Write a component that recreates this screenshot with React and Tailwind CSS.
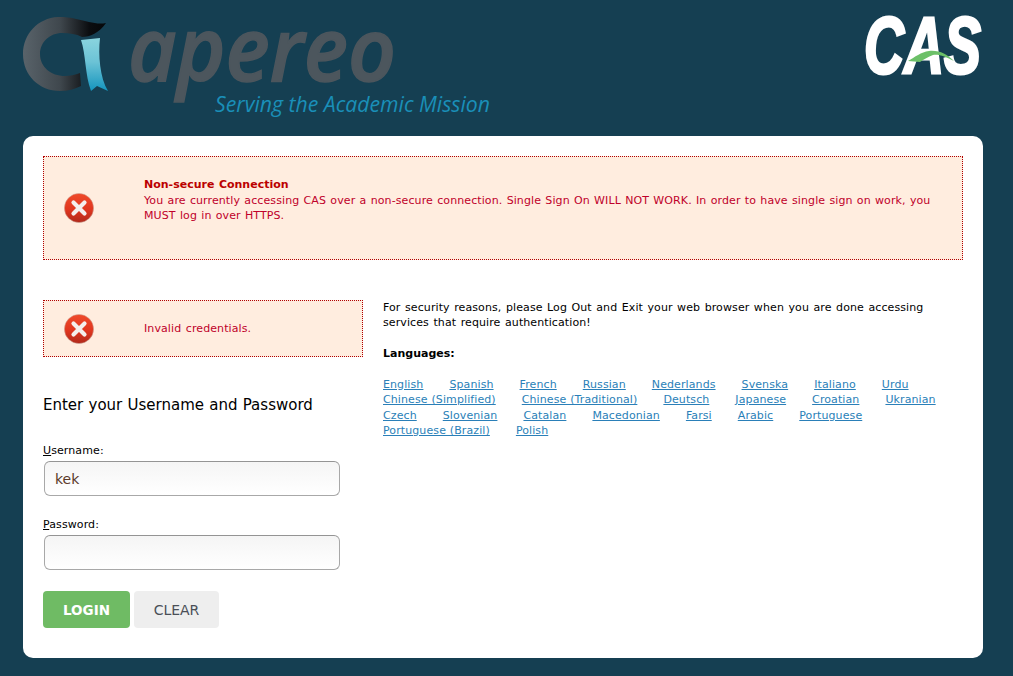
const dv = "font-['DejaVu_Sans',sans-serif]";
const spaced = "tracking-[0.1px] [word-spacing:0.9px]";

function ErrIcon({ id }) {
  return (
    <svg width="30" height="30" viewBox="0 0 30 30" className="shrink-0 block">
      <defs>
        <linearGradient id={id} x1="0" y1="0" x2="0" y2="1">
          <stop offset="0" stopColor="#f04a2a" />
          <stop offset="0.55" stopColor="#e0361f" />
          <stop offset="1" stopColor="#b02a1c" />
        </linearGradient>
      </defs>
      <circle cx="15" cy="15" r="14.6" fill={`url(#${id})`} stroke="#c9a99c" strokeWidth="0.5" />
      <path d="M9.5 9.5 L20.5 20.5 M20.5 9.5 L9.5 20.5" stroke="#f4efed" strokeWidth="4.2" strokeLinecap="round" />
    </svg>
  );
}

function Apereo() {
  return (
    <svg width="490" height="118" viewBox="0 0 490 118" className="block">
      <defs>
        <linearGradient id="ring" x1="0" y1="0" x2="1" y2="0">
          <stop offset="0" stopColor="#59636a" />
          <stop offset="0.45" stopColor="#3f474d" />
          <stop offset="0.8" stopColor="#0b0d10" />
          <stop offset="1" stopColor="#050709" />
        </linearGradient>
        <linearGradient id="rib" x1="0" y1="0" x2="0" y2="1">
          <stop offset="0" stopColor="#8ad4de" />
          <stop offset="0.45" stopColor="#6cc3d6" />
          <stop offset="1" stopColor="#1494bd" />
        </linearGradient>
      </defs>
      <path
        d="M106 23 C96 25 88 21 76 19 C68 17 62 17 58 17 C38 18 23 34 23 54 C23 75 39 91 60 91 C68 91 75 89 81 86 L80 73 C75 75 70 76 65 76 C51 76 40 67 40 54 C40 42 50 33 62 33 C70 33 76 34 82 37 C90 37 99 33 106 23 Z"
        fill="url(#ring)"
      />
      <path d="M81 40 L100 38 C98 55 100 78 108 91 L97 86 L91 91 C85 75 86 55 81 40 Z" fill="url(#rib)" />
      <text x="128" y="81" textLength="268" lengthAdjust="spacingAndGlyphs" fontFamily="'Open Sans',sans-serif" fontStyle="italic" fontWeight="600" fontSize="88" stroke="#4c565d" strokeWidth="1.5" fill="#4c565d">apereo</text>
      <text x="215" y="112" textLength="275" lengthAdjust="spacingAndGlyphs" fontFamily="'Open Sans',sans-serif" fontStyle="italic" fontSize="22" fill="#1a8fb8">Serving the Academic Mission</text>
    </svg>
  );
}

function CasLogo() {
  return (
    <svg width="120" height="62" viewBox="0 0 120 62" className="block">
      <text x="1" y="58" textLength="117" lengthAdjust="spacingAndGlyphs" fontFamily="'Liberation Sans',sans-serif" fontStyle="italic" fontWeight="700" fontSize="80" stroke="#ffffff" strokeWidth="3" fill="#ffffff">CAS</text>
      <path d="M45 46 C52 42 58 37 66 36 C76 35 84 39 91 46 C83 42 76 39 70 40 C65 42 61 44 57 47 Z" fill="#6cc068" />
    </svg>
  );
}

const rows = ["English","Spanish","French","Russian","Nederlands","Svenska","Italiano","Urdu","Chinese (Simplified)","Chinese (Traditional)","Deutsch","Japanese","Croatian","Ukranian","Czech","Slovenian","Catalan","Macedonian","Farsi","Arabic","Portuguese","Portuguese (Brazil)","Polish"];

function Field({ label, rest, value, mb }) {
  return (
    <div className={mb}>
      <label className={`block text-[11px] leading-[15px] text-black mb-[3px] ${spaced}`}><span className="underline">{label}</span>{rest}</label>
      <input
        readOnly
        value={value}
        className={`${dv} ml-px block w-[296px] h-[35px] rounded-[6px] border border-[#a8a8a8] border-t-[#949494] bg-gradient-to-b from-[#f5f5f5] to-white px-[10px] text-[14px] text-[#5b3a2a] outline-none`}
      />
    </div>
  );
}

export default function App() {
  return (
    <div className={`${dv} min-h-[676px] bg-[#153f52] pl-[23px] pr-[30px] pb-[18px]`}>
      <header className="flex h-[136px] items-start justify-between">
        <div className="-ml-[23px]"><Apereo /></div>
        <div className="mt-[15px]"><CasLogo /></div>
      </header>
      <main className="h-[522px] rounded-[10px] bg-white p-5">
        <div className="flex h-[104px] items-start border border-dotted border-[#b00000] bg-[#ffeddf] text-[11px] leading-[15.4px] text-[#c0002a] tracking-[0.1px] [word-spacing:0.68px]">
          <div className="mt-[36px] ml-[20px] w-[80px] shrink-0"><ErrIcon id="e1" /></div>
          <div className="mt-[20.3px] pr-[20px]">
            <div className="font-bold text-[#bb0000] tracking-normal">Non-secure Connection</div>
            <p>You are currently accessing CAS over a non-secure connection. Single Sign On WILL NOT WORK. In order to have single sign on work, you MUST log in over HTTPS.</p>
          </div>
        </div>
        <div className="mt-10 flex gap-5">
          <div className="w-[320px]">
            <div className={`flex h-[57px] items-center border border-dotted border-[#b00000] bg-[#ffeddf] text-[11px] text-[#c0002a] ${spaced}`}>
              <div className="ml-[20px] w-[80px] shrink-0"><ErrIcon id="e2" /></div>
              <span className="pt-px">Invalid credentials.</span>
            </div>
            <h2 className="mt-[38px] text-[15px] leading-[20px] text-black [word-spacing:0.5px]">Enter your Username and Password</h2>
            <div className="mt-[28px]">
              <Field label="U" rest="sername:" value="kek" mb="mb-[21px]" />
              <Field label="P" rest="assword:" value="" mb="mb-[21px]" />
            </div>
            <div className="flex gap-1">
              <button className="h-[37px] w-[87px] rounded-[4px] bg-[#6fbb64] pt-px text-[13.5px] font-bold text-white">LOGIN</button>
              <button className="h-[37px] w-[85px] rounded-[4px] bg-[#eeeeee] pt-px text-[14px] text-[#4a4f57]">CLEAR</button>
            </div>
          </div>
          <div className={`w-[580px] text-[11px] leading-[15.4px] text-black ${spaced}`}>
            <p>For security reasons, please Log Out and Exit your web browser when you are done accessing services that require authentication!</p>
            <p className="mt-[15px] font-bold tracking-normal">Languages:</p>
            <div className="mt-[15.6px] flex flex-wrap gap-x-[26px] [word-spacing:0.2px]">
              {rows.map((r) => (
                <a key={r} href="#" className="text-[#2a7fb8] underline">{r}</a>
              ))}
            </div>
          </div>
        </div>
      </main>
    </div>
  );
}
